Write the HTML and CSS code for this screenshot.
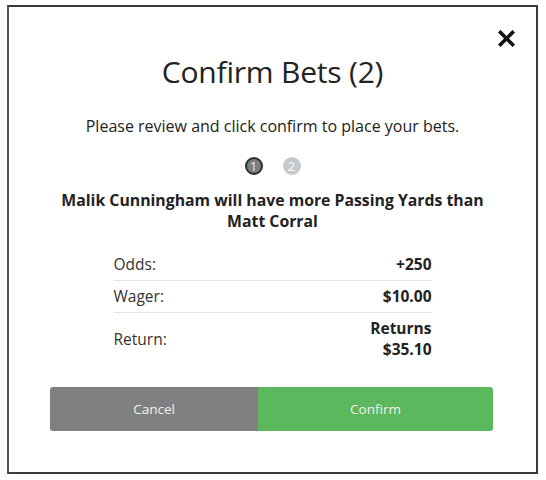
FILE: index.html
```html
<!DOCTYPE html>
<html>
<head>
<meta charset="utf-8">
<link rel="stylesheet" href="styles.css">
</head>
<body>
<div class="frame">
  <div class="modal">
    <button class="close" aria-label="Close">
      <svg width="17" height="17" viewBox="0 0 17 17"><path d="M2.5 2.5 L14.5 14.5 M14.5 2.5 L2.5 14.5" stroke="#111" stroke-width="3.6" stroke-linecap="square"/></svg>
    </button>
    <h1 class="title">Confirm Bets (2)</h1>
    <p class="subtitle">Please review and click confirm to place your bets.</p>
    <div class="steps">
      <span class="step active">1</span>
      <span class="step">2</span>
    </div>
    <h2 class="bet">Malik Cunningham will have more Passing Yards than Matt Corral</h2>
    <div class="table">
      <div class="row">
        <span class="label">Odds:</span>
        <span class="value">+250</span>
      </div>
      <div class="row">
        <span class="label">Wager:</span>
        <span class="value">$10.00</span>
      </div>
      <div class="row last">
        <span class="label">Return:</span>
        <span class="value">Returns<br>$35.10</span>
      </div>
    </div>
    <div class="actions">
      <button class="btn cancel">Cancel</button>
      <button class="btn confirm">Confirm</button>
    </div>
  </div>
</div>
</body>
</html>
```
FILE: styles.css
```css
html, body {
  margin: 0;
  padding: 0;
  background: #fff;
}
body {
  font-family: "Open Sans", "Noto Sans", sans-serif;
  color: #222;
}
.frame {
  margin: 5px 8px 0 7px;
  width: 527px;
  height: 465px;
  border: 2px solid #3a3a3a;
  border-left-color: #555;
  background: #fff;
}
.modal {
  position: relative;
  display: flex;
  flex-direction: column;
  align-items: center;
  height: 100%;
}
.close {
  position: absolute;
  top: 23px;
  right: 21px;
  padding: 0;
  border: 0;
  background: none;
  width: 17px;
  height: 17px;
  display: flex;
}
.title {
  margin: 47px 0 0;
  font-size: 30px;
  font-weight: 400;
  line-height: 36px;
  color: #222;
  letter-spacing: -0.2px;
}
.subtitle {
  margin: 25px 0 0;
  font-size: 16px;
  line-height: 22px;
  color: #222;
}
.steps {
  display: flex;
  gap: 20px;
  margin-top: 20px;
}
.step {
  width: 18px;
  height: 18px;
  border-radius: 50%;
  background: #c4c9ce;
  color: #fff;
  font-size: 13px;
  line-height: 18px;
  text-align: center;
  box-sizing: border-box;
}
.step.active {
  background: #7a7d80;
  border: 2px solid #2e2e2e;
  line-height: 14px;
  color: #e8e8f0;
}
.bet {
  margin: 15px 0 0;
  width: 440px;
  font-size: 15.8px;
  font-weight: 700;
  line-height: 21px;
  text-align: center;
  color: #222;
}
.table {
  margin-top: 17px;
  width: 318px;
}
.row {
  display: flex;
  justify-content: space-between;
  align-items: center;
  padding: 5px 0;
  border-bottom: 1px solid #e4e4e4;
  font-size: 15.5px;
  line-height: 21px;
}
.row.last {
  border-bottom: 0;
}
.label {
  color: #333;
}
.value {
  font-weight: 700;
  text-align: right;
  color: #222;
}
.actions {
  display: flex;
  margin-top: 22px;
  width: 443px;
  margin-left: -2px;
}
.btn {
  height: 44px;
  border: 0;
  color: #f0f0f0;
  font-family: "Open Sans", "Noto Sans", sans-serif;
  font-size: 13.5px;
  padding: 0;
}
.cancel {
  width: 208px;
  background: #808080;
  border-radius: 3px 0 0 3px;
}
.confirm {
  flex: 1;
  background: #5cb85c;
  border-radius: 0 3px 3px 0;
}
```
